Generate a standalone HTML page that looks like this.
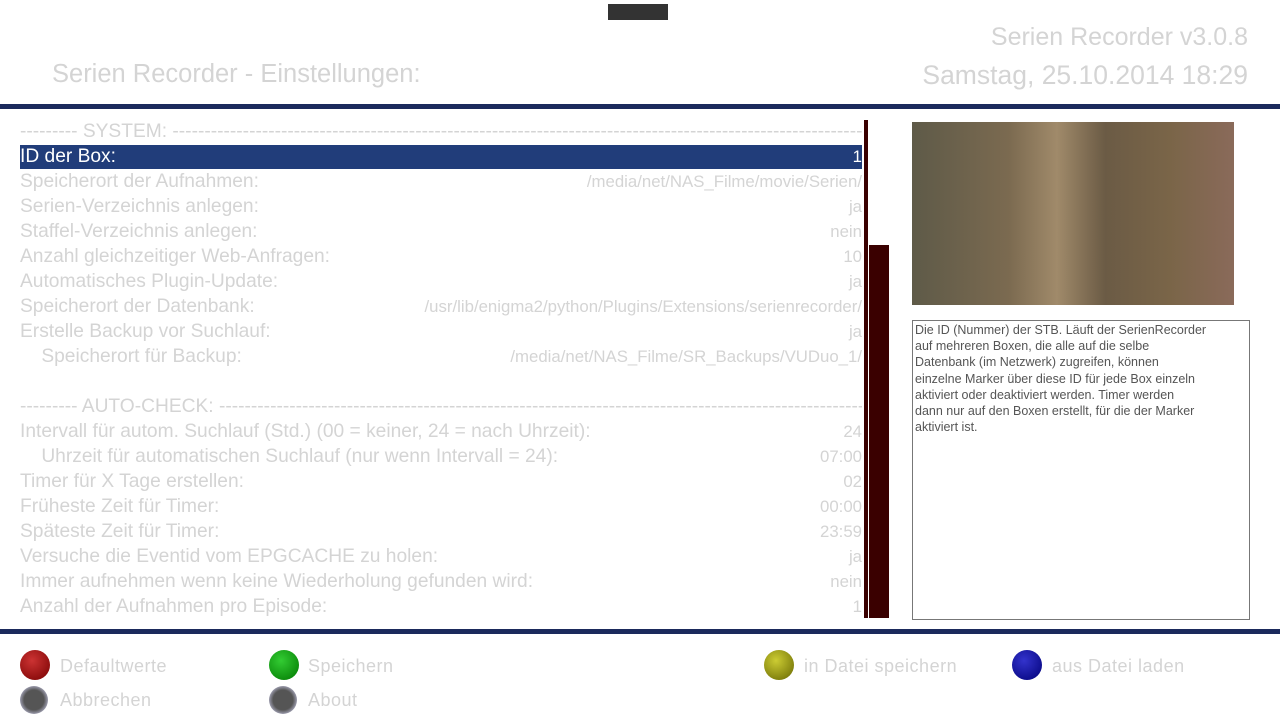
<!DOCTYPE html>
<html><head><meta charset="utf-8"><style>
body{margin:0;width:1280px;height:720px;background:#fff;position:relative;overflow:hidden;font-family:"Liberation Sans",sans-serif;color:#d4d4d4}
.a{position:absolute;white-space:nowrap}
.r{position:absolute;left:20px;width:842px;height:25px;font-size:19.2px;line-height:25px;overflow:hidden;white-space:nowrap}
.r span{position:absolute;right:0;top:0;font-size:16.8px;background:transparent}
.btn{position:absolute;width:30px;height:30px;border-radius:50%}
.bt{position:absolute;font-size:18px;line-height:20px;letter-spacing:0.5px}
</style></head><body>
<div class="a" style="left:608px;top:4px;width:60px;height:16px;background:#333"></div>
<div class="a" style="right:32px;top:23px;font-size:25px">Serien Recorder v3.0.8</div>
<div class="a" style="left:52px;top:60px;font-size:25.5px">Serien Recorder - Einstellungen:</div>
<div class="a" style="right:32px;top:60px;font-size:26.5px">Samstag, 25.10.2014 18:29</div>
<div class="a" style="left:0;top:104px;width:1280px;height:5px;background:#1b2a5c"></div>
<div class="a" style="left:20px;top:145px;width:842px;height:24px;background:#213d7a"></div>
<div class="r" style="top:119px">--------- SYSTEM: ----------------------------------------------------------------------------------------------------------------</div>
<div class="r" style="top:144px;color:#fff">ID der Box:<span>1</span></div>
<div class="r" style="top:169px">Speicherort der Aufnahmen:<span>/media/net/NAS_Filme/movie/Serien/</span></div>
<div class="r" style="top:194px">Serien-Verzeichnis anlegen:<span>ja</span></div>
<div class="r" style="top:219px">Staffel-Verzeichnis anlegen:<span>nein</span></div>
<div class="r" style="top:244px">Anzahl gleichzeitiger Web-Anfragen:<span>10</span></div>
<div class="r" style="top:269px">Automatisches Plugin-Update:<span>ja</span></div>
<div class="r" style="top:294px">Speicherort der Datenbank:<span>/usr/lib/enigma2/python/Plugins/Extensions/serienrecorder/</span></div>
<div class="r" style="top:319px">Erstelle Backup vor Suchlauf:<span>ja</span></div>
<div class="r" style="top:344px">&nbsp;&nbsp;&nbsp;&nbsp;Speicherort für Backup:<span>/media/net/NAS_Filme/SR_Backups/VUDuo_1/</span></div>
<div class="r" style="top:394px">--------- AUTO-CHECK: -----------------------------------------------------------------------------------------------------------</div>
<div class="r" style="top:419px">Intervall für autom. Suchlauf (Std.) (00 = keiner, 24 = nach Uhrzeit):<span>24</span></div>
<div class="r" style="top:444px">&nbsp;&nbsp;&nbsp;&nbsp;Uhrzeit für automatischen Suchlauf (nur wenn Intervall = 24):<span>07:00</span></div>
<div class="r" style="top:469px">Timer für X Tage erstellen:<span>02</span></div>
<div class="r" style="top:494px">Früheste Zeit für Timer:<span>00:00</span></div>
<div class="r" style="top:519px">Späteste Zeit für Timer:<span>23:59</span></div>
<div class="r" style="top:544px">Versuche die Eventid vom EPGCACHE zu holen:<span>ja</span></div>
<div class="r" style="top:569px">Immer aufnehmen wenn keine Wiederholung gefunden wird:<span>nein</span></div>
<div class="r" style="top:594px">Anzahl der Aufnahmen pro Episode:<span>1</span></div>
<div class="a" style="left:864px;top:120px;width:4px;height:498px;background:#3a0000"></div>
<div class="a" style="left:869px;top:245px;width:20px;height:373px;background:#3a0000"></div>
<div class="a" style="left:912px;top:122px;width:322px;height:183px;background:linear-gradient(90deg,#5e5a48,#7b6a50 30%,#a08a6a 45%,#6b5b45 60%,#7a6548 80%,#8a6a5a)"></div>
<div class="a" style="left:912px;top:320px;width:336px;height:298px;border:1px solid #777;background:#fff"></div>
<div class="a" style="left:915px;top:322px;width:322px;font-size:12.5px;line-height:16.2px;white-space:normal;color:#555">Die ID (Nummer) der STB. Läuft der SerienRecorder<br>auf mehreren Boxen, die alle auf die selbe<br>Datenbank (im Netzwerk) zugreifen, können<br>einzelne Marker über diese ID für jede Box einzeln<br>aktiviert oder deaktiviert werden. Timer werden<br>dann nur auf den Boxen erstellt, für die der Marker<br>aktiviert ist.</div>
<div class="a" style="left:0;top:629px;width:1280px;height:5px;background:#1b2a5c"></div>
<div class="btn" style="left:20px;top:650px;background:radial-gradient(circle at 40% 35%,#c33,#700)"></div>
<div class="bt" style="left:60px;top:656px">Defaultwerte</div>
<div class="btn" style="left:269px;top:650px;background:radial-gradient(circle at 40% 35%,#3c3,#070)"></div>
<div class="bt" style="left:308px;top:656px">Speichern</div>
<div class="btn" style="left:764px;top:650px;background:radial-gradient(circle at 40% 35%,#cc3,#660)"></div>
<div class="bt" style="left:804px;top:656px">in Datei speichern</div>
<div class="btn" style="left:1012px;top:650px;background:radial-gradient(circle at 40% 35%,#33c,#007)"></div>
<div class="bt" style="left:1052px;top:656px">aus Datei laden</div>
<div class="btn" style="left:20px;top:686px;width:28px;height:28px;background:radial-gradient(circle,#555 50%,#99a 70%,#fff 75%)"></div>
<div class="bt" style="left:60px;top:690px">Abbrechen</div>
<div class="btn" style="left:269px;top:686px;width:28px;height:28px;background:radial-gradient(circle,#555 50%,#99a 70%,#fff 75%)"></div>
<div class="bt" style="left:308px;top:690px">About</div>
</body></html>
